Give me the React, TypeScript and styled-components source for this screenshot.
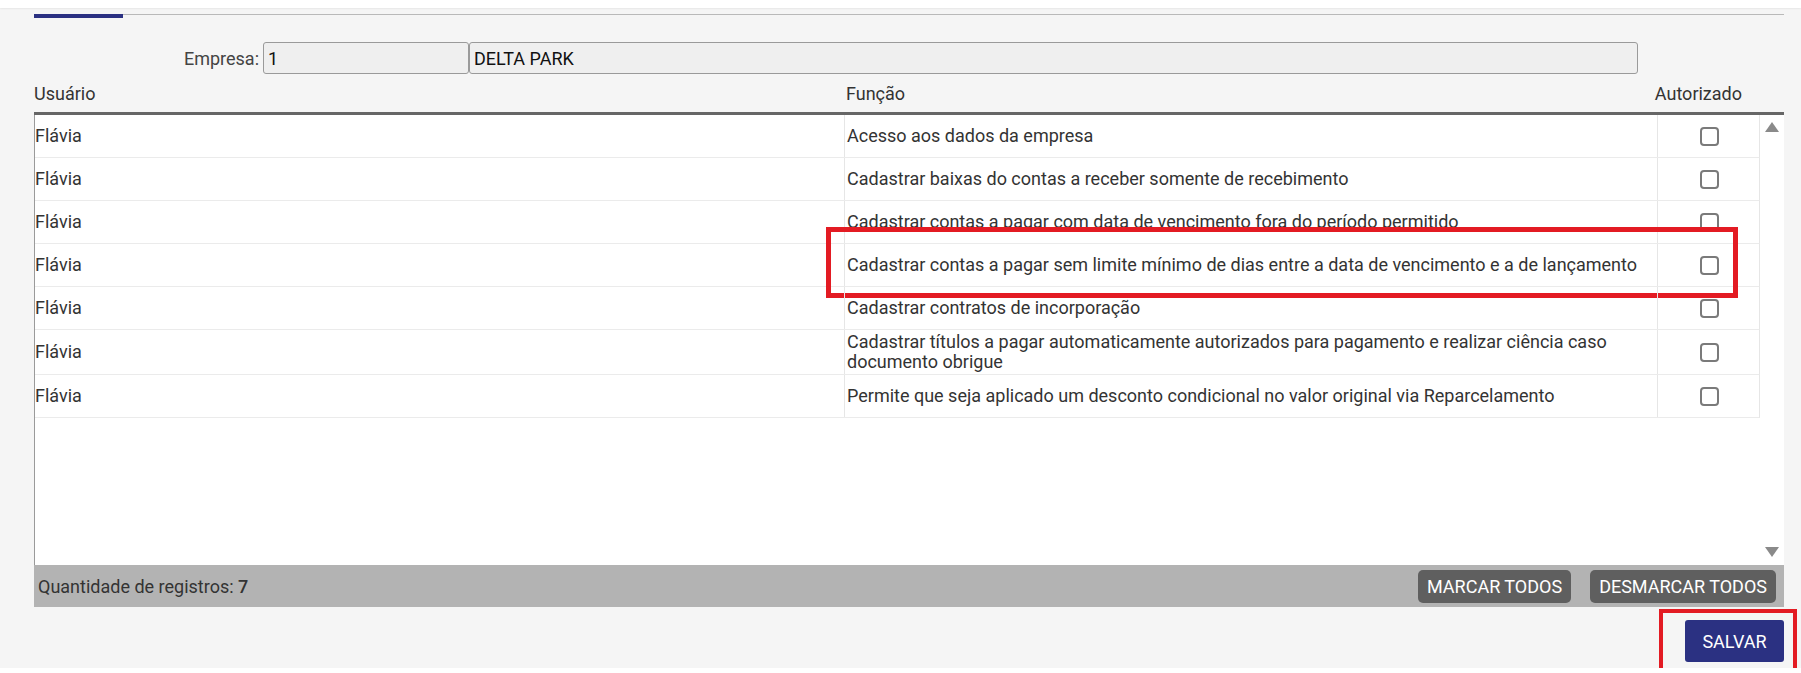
import React from 'react';
import styled, { createGlobalStyle } from 'styled-components';

const GlobalStyle = createGlobalStyle`
	html, body {
		margin: 0;
		padding: 0;
		background: #ffffff;
		font-family: Roboto, 'Liberation Sans', Arial, sans-serif;
		color: #333333;
	}
	* {
		box-sizing: border-box;
	}
`;

const FUNCOES = [
	'Acesso aos dados da empresa',
	'Cadastrar baixas do contas a receber somente de recebimento',
	'Cadastrar contas a pagar com data de vencimento fora do período permitido',
	'Cadastrar contas a pagar sem limite mínimo de dias entre a data de vencimento e a de lançamento',
	'Cadastrar contratos de incorporação',
	'Cadastrar títulos a pagar automaticamente autorizados para pagamento e realizar ciência caso documento obrigue',
	'Permite que seja aplicado um desconto condicional no valor original via Reparcelamento',
];

const HIGHLIGHT_ROW = 3;

const App: React.FC = () => {
	return (
		<>
			<GlobalStyle />
			<TopStrip />
			<Page>
				<TabBar>
					<ActiveTab />
					<TabRule />
				</TabBar>

				<CompanyRow>
					<FieldLabel>Empresa:</FieldLabel>
					<CodeInput readOnly value="1" />
					<NameInput readOnly value="DELTA PARK" />
				</CompanyRow>

				<HeaderRow>
					<HeaderCell>Usuário</HeaderCell>
					<HeaderCell $pad="2px">Função</HeaderCell>
					<HeaderCell $align="right" $pad="18px">
						Autorizado
					</HeaderCell>
				</HeaderRow>

				<TableBody>
					<Rows>
						{FUNCOES.map((funcao, i) => (
							<Row key={funcao}>
								<Cell>Flávia</Cell>
								<Cell $divider>{funcao}</Cell>
								<CheckCell $divider>
									<Check type="checkbox" />
								</CheckCell>
								{i === HIGHLIGHT_ROW && <RowMark />}
							</Row>
						))}
					</Rows>
					<ScrollTrack>
						<Arrow viewBox="0 0 14 10">
							<path d="M7 0 L14 10 L0 10 Z" />
						</Arrow>
						<Arrow viewBox="0 0 14 10">
							<path d="M0 0 L14 0 L7 10 Z" />
						</Arrow>
					</ScrollTrack>
				</TableBody>

				<FooterBar>
					<Count>
						Quantidade de registros: <strong>7</strong>
					</Count>
					<FooterActions>
						<GreyButton>MARCAR TODOS</GreyButton>
						<GreyButton>DESMARCAR TODOS</GreyButton>
					</FooterActions>
				</FooterBar>

				<SaveRow>
					<SaveWrap>
						<SaveButton>SALVAR</SaveButton>
						<SaveMark />
					</SaveWrap>
				</SaveRow>
			</Page>
		</>
	);
};
export default App;

const TopStrip = styled.div`
	height: 8px;
	background: #ffffff;
	box-shadow: 0 1px 2px rgba(0, 0, 0, 0.06);
	position: relative;
`;

const Page = styled.div`
	height: 660px;
	background: #f5f5f5;
	padding: 6px 17px 0 34px;
	display: flex;
	flex-direction: column;
`;

const TabBar = styled.div`
	display: flex;
	align-items: flex-start;
	height: 5px;
`;

const ActiveTab = styled.div`
	width: 89px;
	height: 4px;
	background: #2b3182;
`;

const TabRule = styled.div`
	flex: 1;
	height: 1px;
	background: #b9b9b9;
`;

const CompanyRow = styled.div`
	display: flex;
	align-items: center;
	margin-top: 23px;
	height: 32px;
`;

const FieldLabel = styled.label`
	width: 225px;
	text-align: right;
	margin-right: 4px;
	font-size: 18px;
	color: #444444;
`;

const BaseInput = styled.input`
	height: 32px;
	border: 1px solid #9a9a9a;
	border-radius: 3px;
	background: #efefef;
	font-family: Roboto, 'Liberation Sans', Arial, sans-serif;
	font-size: 18px;
	color: #111111;
	padding: 0 4px;
	outline: none;
`;

const CodeInput = styled(BaseInput)`
	width: 206px;
`;

const NameInput = styled(BaseInput)`
	width: 1169px;
`;

const HeaderRow = styled.div`
	display: grid;
	grid-template-columns: 810px 813px 103px;
	height: 41px;
	border-bottom: 3px solid #666666;
`;

const HeaderCell = styled.div<{ $align?: string; $pad?: string }>`
	display: flex;
	align-items: flex-end;
	justify-content: ${(p) => (p.$align === 'right' ? 'flex-end' : 'flex-start')};
	padding: 0 ${(p) => (p.$align === 'right' ? p.$pad : '0')} 8px ${(p) => (p.$align === 'right' ? '0' : p.$pad || '0')};
	font-size: 18px;
	color: #333333;
`;

const TableBody = styled.div`
	display: flex;
	height: 450px;
	background: #ffffff;
	border-left: 1px solid #9a9a9a;
`;

const Rows = styled.div`
	width: 1725px;
	align-self: flex-start;
`;

const Row = styled.div`
	position: relative;
	display: grid;
	grid-template-columns: 809px 813px 103px;
	min-height: 43px;
	border-bottom: 1px solid #ebebeb;
	border-right: 1px solid #e6e6e6;
`;

const Cell = styled.div<{ $divider?: boolean }>`
	display: flex;
	align-items: center;
	padding: 2px ${(p) => (p.$divider ? '4px' : '0')} 2px ${(p) => (p.$divider ? '2px' : '0')};
	border-left: ${(p) => (p.$divider ? '1px solid #e6e6e6' : 'none')};
	font-size: 18px;
	line-height: 20px;
	color: #333333;
`;

const CheckCell = styled(Cell)`
	justify-content: center;
	padding: 0 0 0 1px;
`;

const Check = styled.input`
	appearance: none;
	margin: 0;
	width: 19px;
	height: 19px;
	border: 2px solid #7a7a7a;
	border-radius: 4px;
	background: #ffffff;
`;

const RowMark = styled.div`
	position: absolute;
	left: 791px;
	top: -17px;
	width: 912px;
	height: 71px;
	border: 5px solid #e31b23;
	pointer-events: none;
`;

const ScrollTrack = styled.div`
	width: 24px;
	display: flex;
	flex-direction: column;
	justify-content: space-between;
	align-items: center;
	padding: 7px 0 8px 0;
	background: #ffffff;
`;

const Arrow = styled.svg`
	width: 14px;
	height: 10px;
	fill: #8a8a8a;
`;

const FooterBar = styled.div`
	display: flex;
	align-items: center;
	justify-content: space-between;
	height: 42px;
	background: #b3b3b3;
	padding: 0 8px 0 4px;
`;

const Count = styled.span`
	font-size: 18px;
	color: #333333;

	strong {
		font-weight: 500;
	}
`;

const FooterActions = styled.div`
	display: flex;
	gap: 19px;
`;

const GreyButton = styled.button`
	height: 33px;
	padding: 0 9px;
	border: none;
	border-radius: 5px;
	background: #5f5f5f;
	color: #ffffff;
	font-family: Roboto, 'Liberation Sans', Arial, sans-serif;
	font-size: 18px;
`;

const SaveRow = styled.div`
	display: flex;
	justify-content: flex-end;
	margin-top: 13px;
`;

const SaveWrap = styled.div`
	position: relative;
`;

const SaveButton = styled.button`
	width: 99px;
	height: 42px;
	border: none;
	border-radius: 3px;
	background: #2b3182;
	color: #ffffff;
	font-family: Roboto, 'Liberation Sans', Arial, sans-serif;
	font-size: 18px;
`;

const SaveMark = styled.div`
	position: absolute;
	left: -26px;
	top: -11px;
	width: 138px;
	height: 63px;
	border: 4px solid #e31b23;
	pointer-events: none;
`;
